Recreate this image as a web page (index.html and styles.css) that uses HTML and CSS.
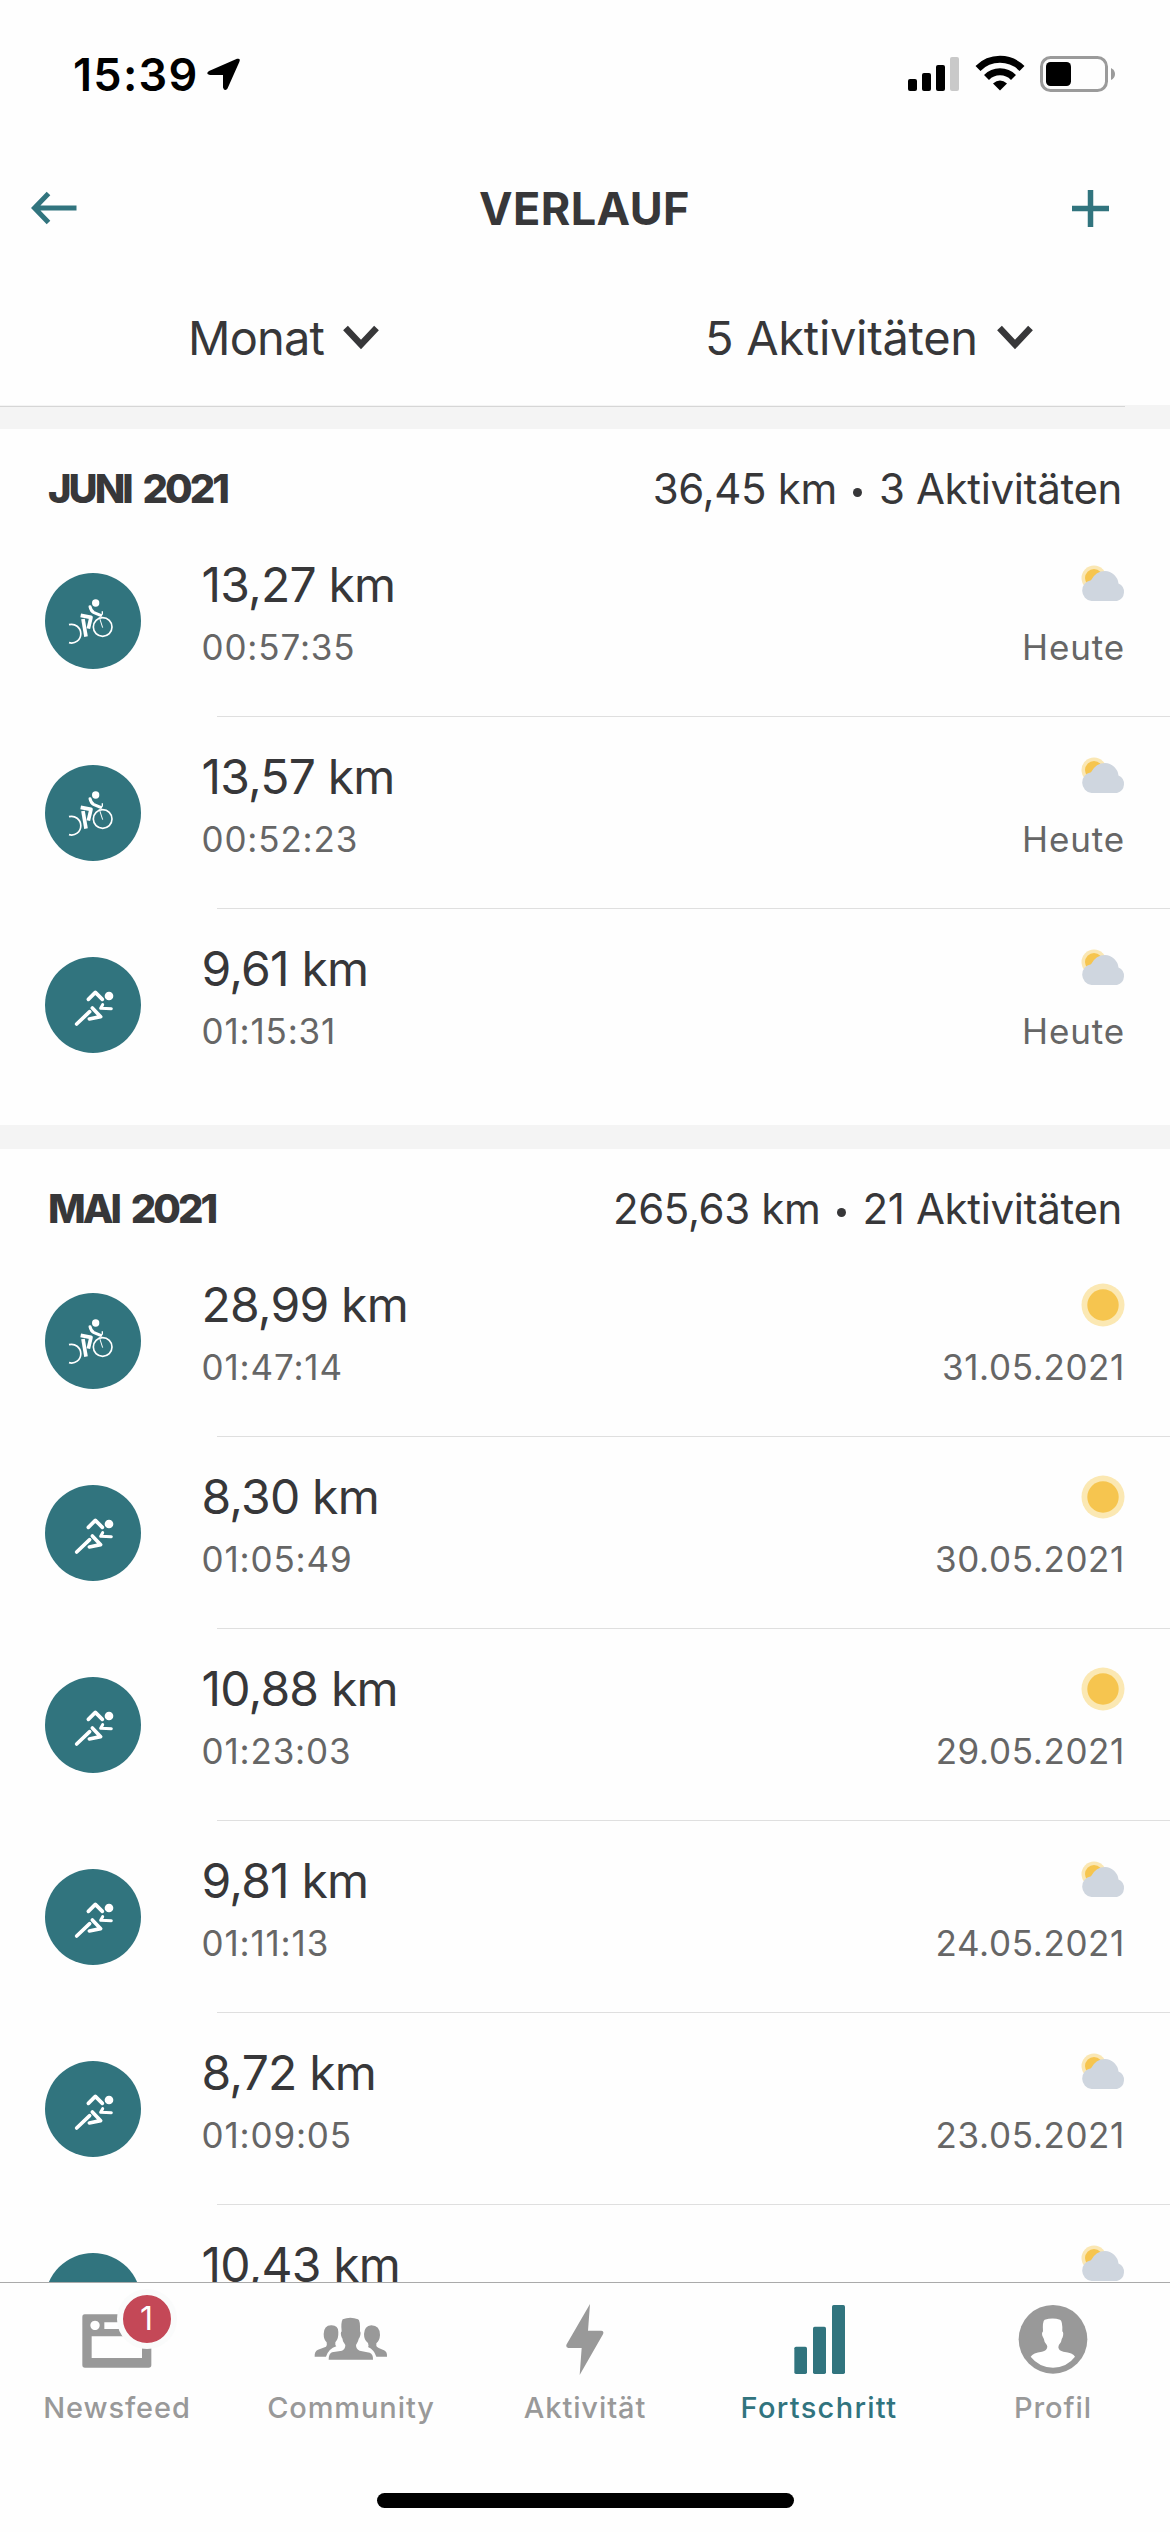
FILE: index.html
```html
<!DOCTYPE html>
<html lang="de">
<head>
<meta charset="utf-8">
<title>Verlauf</title>
<link rel="stylesheet" href="styles.css">
</head>
<body>
<svg class="defs" aria-hidden="true">
  <symbol id="bike" viewBox="45 39 288 288">
    <circle cx="197" cy="129" r="11" fill="#fff"/>
    <g fill="none" stroke="#fff" stroke-linejoin="round">
      <path d="M180 140 Q183 154 192 158 L212 166" stroke-width="9" stroke-linecap="round"/>
      <path d="M212 167 L217 162 L217 154" stroke-width="4"/>
      <path d="M152 166 L183 172 L175 206" stroke-width="11"/>
      <path d="M159 177 L168 230" stroke-width="11"/>
      <circle cx="218" cy="201" r="28" stroke-width="5"/>
      <path d="M208 172 L218 203" stroke-width="3"/>
      <path d="M117 194 A28 28 0 1 1 117 248" stroke-width="5"/>
    </g>
  </symbol>
  <symbol id="run" viewBox="45 51 288 288">
    <circle cx="237" cy="168" r="13" fill="#fff"/>
    <g fill="none" stroke="#fff" stroke-width="11" stroke-linecap="round" stroke-linejoin="round">
      <path d="M175 178 L196 157 L217 178"/>
      <path d="M218 194 L212 205 L244 206" stroke-width="9"/>
      <path d="M187 204 L212 230 L178 237"/>
      <path d="M179 215 L140 252"/>
    </g>
  </symbol>
  <symbol id="cloudy" viewBox="0 0 44 44">
    <circle cx="13" cy="15" r="12.5" fill="#fae7b4"/>
    <circle cx="13" cy="15" r="9" fill="#f6c54f"/>
    <path d="M10.500 38 A10.500 10.500 0 0 1 10 17.200 Q15 8 24 8 A14 14 0 0 1 37.500 20.500 A9.300 9.300 0 0 1 36 38 Z" fill="#cfd6df"/>
  </symbol>
  <symbol id="sunny" viewBox="0 0 44 44">
    <circle cx="22" cy="22" r="21.500" fill="#fbe8b3"/>
    <circle cx="22" cy="22" r="15.700" fill="#f6c54f"/>
  </symbol>
</svg>

<header class="status">
  <div class="clock">
    <span>15:39</span>
    <svg width="33" height="33" viewBox="0 0 33 33"><path d="M30 0.800 Q34 0 32.300 4 L20.500 30.500 Q17.500 34 16 29.500 V17 H3 Q-2 16 2 13 Z"/></svg>
  </div>
  <div class="indicators">
    <svg width="52" height="36" viewBox="0 0 52 36"><rect x="0" y="23" width="9" height="12" rx="2"/><rect x="14" y="17" width="9" height="18" rx="2"/><rect x="28" y="9" width="9" height="26" rx="2"/><rect x="42" y="1" width="9" height="34" rx="2" fill="#c9c9c9"/></svg>
    <svg class="wifi" width="50" height="36" viewBox="0 0 50 36"><g fill="none" stroke="#000" stroke-width="7"><path d="M3 13.500 A31 31 0 0 1 47 13.500"/><path d="M11.500 22.500 A19 19 0 0 1 38.500 22.500"/></g><path d="M18 28.500 Q25 22.500 32 28.500 L25 35.500 Z"/></svg>
    <svg width="76" height="36" viewBox="0 0 76 36"><rect x="1.500" y="1.500" width="65" height="33" rx="9" fill="none" stroke="#9b9b9b" stroke-width="3"/><rect x="6" y="6" width="25" height="24" rx="4.500"/><path d="M71 12 Q75 14 75 18 Q75 22 71 24 Z" fill="#9b9b9b"/></svg>
  </div>
</header>

<nav class="titlebar">
  <svg width="46" height="34" viewBox="0 0 46 34"><path d="M45.500 17 H4 M17.500 2.500 L3.500 17 L17.500 31.500" fill="none" stroke="#31747e" stroke-width="5"/></svg>
  <h1>VERLAUF</h1>
  <svg width="37" height="37" viewBox="0 0 37 37"><path d="M18.500 0 V37 M0 18.500 H37" stroke="#31747e" stroke-width="5.500"/></svg>
</nav>

<div class="filters">
  <div class="filter"><span>Monat</span><svg width="36" height="25" viewBox="0 0 36 25"><path d="M2.500 3 L18 19.500 L33.500 3" fill="none" stroke="#373739" stroke-width="6.500"/></svg></div>
  <div class="filter wide"><span>5 Aktivitäten</span><svg width="36" height="25" viewBox="0 0 36 25"><path d="M2.500 3 L18 19.500 L33.500 3" fill="none" stroke="#373739" stroke-width="6.500"/></svg></div>
</div>

<main>
  <section class="ruled">
    <div class="head"><h2>JUNI 2021</h2><p>36,45 km<i></i>3 Aktivitäten</p></div>
    <ul>
      <li><svg class="sport"><use href="#bike"/></svg><div class="info"><div class="top"><b>13,27 km</b><svg class="weather"><use href="#cloudy"/></svg></div><div class="sub"><span>00:57:35</span><span>Heute</span></div></div></li>
      <li><svg class="sport"><use href="#bike"/></svg><div class="info"><div class="top"><b>13,57 km</b><svg class="weather"><use href="#cloudy"/></svg></div><div class="sub"><span>00:52:23</span><span>Heute</span></div></div></li>
      <li><svg class="sport"><use href="#run"/></svg><div class="info"><div class="top"><b>9,61 km</b><svg class="weather"><use href="#cloudy"/></svg></div><div class="sub"><span>01:15:31</span><span>Heute</span></div></div></li>
    </ul>
  </section>
  <section>
    <div class="head"><h2>MAI 2021</h2><p>265,63 km<i></i>21 Aktivitäten</p></div>
    <ul>
      <li><svg class="sport"><use href="#bike"/></svg><div class="info"><div class="top"><b>28,99 km</b><svg class="weather"><use href="#sunny"/></svg></div><div class="sub"><span>01:47:14</span><span class="date">31.05.2021</span></div></div></li>
      <li><svg class="sport"><use href="#run"/></svg><div class="info"><div class="top"><b>8,30 km</b><svg class="weather"><use href="#sunny"/></svg></div><div class="sub"><span>01:05:49</span><span class="date">30.05.2021</span></div></div></li>
      <li><svg class="sport"><use href="#run"/></svg><div class="info"><div class="top"><b>10,88 km</b><svg class="weather"><use href="#sunny"/></svg></div><div class="sub"><span>01:23:03</span><span class="date">29.05.2021</span></div></div></li>
      <li><svg class="sport"><use href="#run"/></svg><div class="info"><div class="top"><b>9,81 km</b><svg class="weather"><use href="#cloudy"/></svg></div><div class="sub"><span>01:11:13</span><span class="date">24.05.2021</span></div></div></li>
      <li><svg class="sport"><use href="#run"/></svg><div class="info"><div class="top"><b>8,72 km</b><svg class="weather"><use href="#cloudy"/></svg></div><div class="sub"><span>01:09:05</span><span class="date">23.05.2021</span></div></div></li>
      <li><svg class="sport"></svg><div class="info"><div class="top"><b>10,43 km</b><svg class="weather"><use href="#cloudy"/></svg></div></div></li>
    </ul>
  </section>
</main>

<footer class="tabbar">
  <div class="tabs">
    <a class="tab">
      <span class="icon">
        <svg width="70" height="72" viewBox="245 219 210 216"><path fill="#999" fill-rule="evenodd" d="M253 253 H445 Q453 253 453 261 V405 Q453 413 445 413 H254 Q246 413 246 405 V261 Q246 253 253 253 Z M274 319 V384 H425 V319 Z M312 277 V297 H400 V277 Z M284 272 A14 14 0 1 0 284.100 272 Z"/></svg>
        <em>1</em>
      </span>
      <span>Newsfeed</span>
    </a>
    <a class="tab">
      <svg width="74" height="72" viewBox="941 219 222 216"><g fill="#999">
        <path d="M992 286 Q1014 285 1014 306 Q1015 327 1005 337 V345 L1008 349 Q985 356 977 380 H943 Q942 364 953 359 L977 350 Q981 346 979 337 Q970 329 970 312 Q971 286 992 286 Z"/>
        <path d="M1113 286 Q1139 287 1139 315 Q1138 332 1128 340 V348 Q1131 353 1151 361 Q1161 365 1160 380 H1128 Q1121 359 1103 351 Q1106 349 1103 339 Q1091 331 1091 312 Q1092 288 1113 286 Z"/>
        <path d="M1027 268 Q1050 258 1073 268 Q1080 270 1079 304 Q1083 309 1078 322 Q1075 325 1073 334 L1067 345 Q1067 358 1078 362 L1108 368 Q1119 372 1118 389 H985 Q985 371 995 367 L1025 362 Q1035 358 1035 345 L1028 334 Q1027 325 1024 322 Q1019 309 1024 304 Q1021 278 1027 268 Z"/>
      </g></svg>
      <span>Community</span>
    </a>
    <a class="tab">
      <svg width="38" height="72" viewBox="494 219 114 216"><path fill="#999" d="M566 222 L560 302 H600 Q609 303 605 313 L535 435 L541 354 H501 Q492 352 496 343 Z"/></svg>
      <span>Aktivität</span>
    </a>
    <a class="tab active">
      <svg width="51" height="72" viewBox="69 219 153 216"><g fill="#31747e"><rect x="70" y="350" width="38" height="82" rx="5"/><rect x="126" y="290" width="39" height="142" rx="5"/><rect x="183" y="225" width="39" height="207" rx="5"/></g></svg>
      <span>Fortschritt</span>
    </a>
    <a class="tab">
      <svg width="70" height="72" viewBox="743 219 210 216"><circle cx="848" cy="328" r="103" fill="#999"/><path fill="#fff" d="M823 269 Q847 262 869 269 Q877 272 876 304 Q881 309 877 322 Q874 326 872 336 Q864 345 864 352 Q866 363 879 365 Q909 368 914 380 Q890 412 848 413 Q806 412 781 380 Q788 368 815 365 Q830 362 831 350 Q831 346 823 336 Q821 326 818 322 Q812 310 818 304 Q816 274 823 269 Z"/></svg>
      <span>Profil</span>
    </a>
  </div>
  <div class="home"></div>
</footer>
</body>
</html>
```
FILE: styles.css
```css
* {
  box-sizing: border-box;
}

body {
  margin: 0;
  width: 1170px;
  height: 2532px;
  display: flex;
  flex-direction: column;
  overflow: hidden;
  background: #fefefe;
  color: #373739;
  font-family: "Inter", "Liberation Sans", sans-serif;
}

svg {
  display: block;
  flex: none;
}

.defs {
  display: none;
}

h1, h2, p, ul {
  margin: 0;
  padding: 0;
}

.status {
  flex: none;
  height: 148px;
  padding: 0 54px 0 73px;
  display: flex;
  justify-content: space-between;
  align-items: center;
  color: #000;
  font-size: 45px;
  font-weight: 600;
  letter-spacing: 1.3px;
}

.clock {
  display: flex;
  align-items: center;
  gap: 8px;
}

.indicators {
  display: flex;
  align-items: center;
  gap: 15px;
}

.wifi {
  margin-top: -2px;
}

.titlebar {
  flex: none;
  height: 120px;
  padding: 0 61px 0 31px;
  display: flex;
  justify-content: space-between;
  align-items: center;
}

.titlebar h1 {
  font-size: 45px;
  font-weight: 700;
  letter-spacing: 0.4px;
  margin-left: 20px;
}

.filters {
  flex: none;
  height: 137px;
  display: grid;
  grid-template-columns: 585px 585px;
  font-size: 47px;
}

.filter {
  display: flex;
  align-items: center;
  height: 139px;
  padding-left: 188px;
  gap: 19px;
  letter-spacing: -0.8px;
}

.filter.wide {
  padding-left: 120px;
  letter-spacing: -0.3px;
}

main {
  flex: 1;
  min-height: 0;
  overflow: hidden;
}

section {
  border-top: 24px solid #f4f4f4;
  padding-bottom: 24px;
}

/* hairline under the filters, ending at the content's right edge */
.ruled {
  border-top: 0;
  padding-top: 24px;
  background-image: linear-gradient(#d6d6d6, #d6d6d6), linear-gradient(#f4f4f4, #f4f4f4);
  background-repeat: no-repeat;
  background-position: 0 1px, 0 0;
  background-size: 1125px 1px, 100% 24px;
}

.head {
  height: 96px;
  padding: 0 48px 0 48px;
  display: flex;
  justify-content: space-between;
  line-height: 120px;
}

.head h2 {
  font-size: 40px;
  font-weight: 800;
  letter-spacing: -3px;
  word-spacing: 6px;
}

.head p {
  font-size: 42px;
  letter-spacing: -0.35px;
}

.head i {
  display: inline-block;
  width: 9px;
  height: 9px;
  border-radius: 50%;
  background: #373739;
  margin: 0 17px 0 16px;
  vertical-align: 7px;
}

li {
  display: flex;
  height: 192px;
  padding-left: 45px;
}

.sport {
  width: 96px;
  height: 96px;
  margin-top: 48px;
  border-radius: 50%;
  background: #31747e;
}

.info {
  flex: 1;
  margin-left: 60.5px;
  padding: 32px 45px 0 0;
  background: linear-gradient(#dfdfdf, #dfdfdf) 15px 191px / 100% 1px no-repeat;
}

li:last-child .info {
  background: none;
}

.top, .sub {
  display: flex;
  justify-content: space-between;
  align-items: center;
}

.top {
  height: 56px;
}

.top b {
  font-size: 48px;
  font-weight: 400;
  letter-spacing: -0.8px;
  margin-top: -2px;
}

.weather {
  width: 44px;
  height: 44px;
}

.sub {
  height: 44px;
  margin-top: 12px;
  color: #666;
  font-size: 35px;
  letter-spacing: 0.85px;
}

.sub .date {
  letter-spacing: 0.65px;
}

.tabbar {
  flex: none;
  height: 250px;
  border-top: 1px solid #aaa;
  display: flex;
  flex-direction: column;
  align-items: center;
}

.tabs {
  width: 1170px;
  height: 210px;
  display: grid;
  grid-template-columns: repeat(5, 1fr);
}

.tab {
  display: flex;
  flex-direction: column;
  align-items: center;
  padding-top: 20px;
  color: #999;
  font-size: 29px;
  line-height: 36px;
  font-weight: 500;
  letter-spacing: 0.9px;
  gap: 15px;
}

.tab.active {
  color: #31747e;
  letter-spacing: 1.3px;
}

.icon {
  position: relative;
}

.icon em {
  position: absolute;
  left: 35px;
  top: -14px;
  width: 60px;
  height: 60px;
  border: 6px solid #fafbfb;
  border-radius: 50%;
  background: #c44857;
  color: #fff;
  font: 400 32px/48px "Inter", sans-serif;
  text-align: center;
}

.home {
  width: 417px;
  height: 15px;
  border-radius: 8px;
  background: #000;
}
```
